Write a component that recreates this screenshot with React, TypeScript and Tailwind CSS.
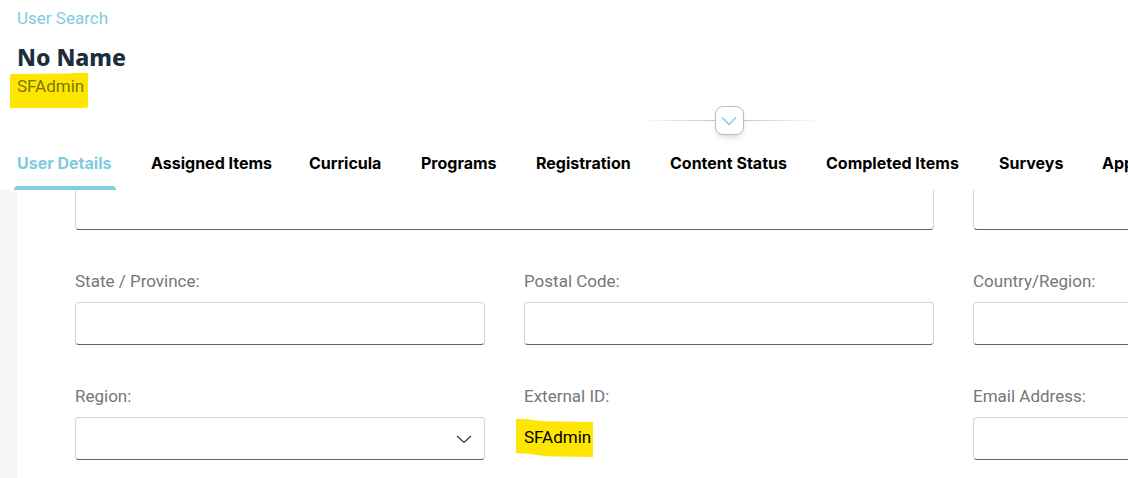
import { useId } from "react";

type FieldProps = { label: string };

const controlClass =
  "h-[43px] w-full rounded border border-[#d0d5de] border-b-[#4f6480] bg-white px-3 text-black outline-none";

const tabs = [
  "User Details",
  "Assigned Items",
  "Curricula",
  "Programs",
  "Registration",
  "Content Status",
  "Completed Items",
  "Surveys",
  "Approvals",
];

function TextField({ label }: FieldProps) {
  const id = useId();
  return (
    <div className="flex flex-col gap-[9px]">
      <label htmlFor={id} className="leading-6 text-[#74777a]">
        {label}
      </label>
      <input id={id} type="text" className={controlClass} />
    </div>
  );
}

function SelectField({ label }: FieldProps) {
  const id = useId();
  return (
    <div className="flex flex-col gap-[9px]">
      <label htmlFor={id} className="leading-6 text-[#74777a]">
        {label}
      </label>
      <div className="relative">
        <select id={id} className={`${controlClass} appearance-none`}>
          <option value=""></option>
        </select>
        <svg
          className="pointer-events-none absolute right-[13px] top-3.5 h-4 w-4"
          viewBox="0 0 16 16"
          fill="none"
          stroke="#32363a"
          strokeWidth="1.1"
          aria-hidden="true"
        >
          <path d="M1 5 L8 11.5 L15 5" />
        </svg>
      </div>
    </div>
  );
}

export default function App() {
  return (
    <div className="flex min-h-screen flex-col overflow-hidden bg-white font-['Roboto','Noto_Sans',sans-serif] text-[17px]">
      <header className="flex flex-col items-start pl-[17px] pt-1.5">
        <a href="#" className="leading-6 text-[#7fcbe0]">
          User Search
        </a>
        <h1 className="mt-[11px] font-['Noto_Sans',sans-serif] text-[23px] font-extrabold leading-8 text-[#1d2d3e]">
          No Name
        </h1>
        <div className="relative mt-px leading-6 text-[#7a7700]">
          <svg
            className="absolute -left-2 -top-1 h-[38px] w-20"
            viewBox="0 0 80 38"
            fill="#ffe600"
            aria-hidden="true"
          >
            <path d="M1 4 L60 3.5 Q66 2.5 79 3 L79 37 Q77 38 73 38 L1 38 Z" />
          </svg>
          <span className="relative">SFAdmin</span>
        </div>
      </header>

      <div className="flex items-center justify-center pl-[330px] pt-2">
        <span className="h-px w-[78px] bg-linear-to-r from-transparent to-[#c4c8cc]" />
        <button
          type="button"
          aria-label="Expand header"
          className="flex h-[29px] w-[29px] items-center justify-center rounded-lg border border-[#b8bec6] bg-white shadow-md"
        >
          <svg
            className="h-4 w-4"
            viewBox="0 0 16 16"
            fill="none"
            stroke="#7fcbe0"
            strokeWidth="1.4"
            aria-hidden="true"
          >
            <path d="M1 4.5 L8 11.5 L15 4.5" />
          </svg>
        </button>
        <span className="h-px w-[78px] bg-linear-to-l from-transparent to-[#c4c8cc]" />
      </div>

      <nav className="grid grid-cols-[134px_158px_112px_115px_134px_156px_173px_103px_120px] pl-3.5 pt-3 font-['Inter',sans-serif] text-base font-bold">
        {tabs.map((tab, index) => (
          <a
            key={tab}
            href="#"
            aria-current={index === 0 ? "page" : undefined}
            className={
              index === 0
                ? "flex h-[43px] w-[102px] flex-col justify-between whitespace-nowrap text-[#7fcbe0]"
                : "flex h-[43px] flex-col whitespace-nowrap text-black"
            }
          >
            <span className="pl-[3px] leading-8">{tab}</span>
            {index === 0 && <span className="h-1 rounded-t-sm bg-[#7fcfdf]" />}
          </a>
        ))}
      </nav>

      <main className="flex flex-1 overflow-hidden bg-[#f5f6f7] pl-[17px]">
        <div className="grid flex-1 grid-cols-[repeat(3,410px)] content-start gap-x-[39px] gap-y-[39px] bg-white pb-4 pl-[58px]">
          <input
            type="text"
            aria-label="Address"
            className="col-span-2 h-10 rounded-b border border-t-0 border-[#d0d5de] border-b-[#4f6480] bg-white px-3 outline-none"
          />
          <input
            type="text"
            aria-label="City"
            className="h-10 rounded-b border border-t-0 border-[#d0d5de] border-b-[#4f6480] bg-white px-3 outline-none"
          />
          <TextField label="State / Province:" />
          <TextField label="Postal Code:" />
          <TextField label="Country/Region:" />
          <SelectField label="Region:" />
          <div className="flex flex-col gap-[9px]">
            <span className="leading-6 text-[#74777a]">External ID:</span>
            <div className="relative flex h-[42px] items-center self-start text-black">
              <svg
                className="absolute -left-2 top-0 h-10 w-20"
                viewBox="0 0 80 40"
                fill="#ffe600"
                aria-hidden="true"
              >
                <path d="M0 2 L12 2 Q20 4 40 4.5 L77 5 L77 40 L40 39.5 Q25 39 15 37 L0 36 Z" />
              </svg>
              <span className="relative">SFAdmin</span>
            </div>
          </div>
          <TextField label="Email Address:" />
        </div>
      </main>
    </div>
  );
}
